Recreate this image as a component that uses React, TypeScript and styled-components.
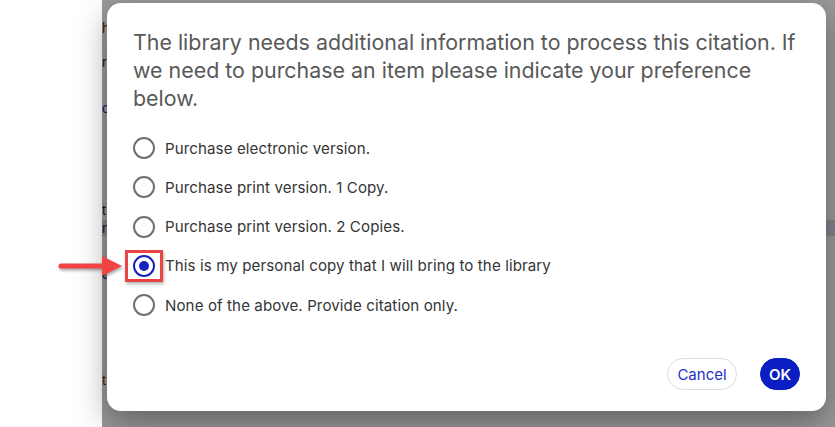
import React, { useState } from "react";
import styled, { createGlobalStyle } from "styled-components";

const GlobalStyle = createGlobalStyle`
  html, body {
    margin: 0;
    padding: 0;
    background: #ffffff;
  }
  body {
    font-family: Inter, "Noto Sans", Arial, sans-serif;
  }
`;

const Screen = styled.div`
  display: flex;
  width: 835px;
  height: 427px;
  overflow: hidden;
`;

const LeftPane = styled.div`
  width: 102px;
  flex-shrink: 0;
  background: #ffffff;
`;

const Stage = styled.div`
  position: relative;
  flex: 1;
  background: #ffffff;
`;

const BehindPage = styled.div`
  display: flex;
  flex-direction: column;
  padding-top: 20px;
  font-family: "Liberation Sans", Arial, sans-serif;
  font-size: 14px;
`;

const BehindLine = styled.div<{ color: string; gap: number; shade?: boolean }>`
  margin-top: ${({ gap }) => gap}px;
  height: 16px;
  color: ${({ color }) => color};
  background: ${({ shade }) => (shade ? "#d8dcec" : "transparent")};
  line-height: 16px;
  white-space: nowrap;
`;

const Overlay = styled.div`
  position: absolute;
  inset: 0;
  display: flex;
  padding: 3px 9px 16px 5px;
  background: rgba(0, 0, 0, 0.4);
`;

const Modal = styled.div`
  flex: 1;
  display: flex;
  flex-direction: column;
  background: #ffffff;
  border-radius: 14px;
  box-shadow: 0 12px 32px rgba(0, 0, 0, 0.35);
  padding: 25px 20px 21px 26px;
`;

const Message = styled.p`
  margin: 0;
  font-size: 21.4px;
  line-height: 28px;
  color: #595959;
  font-weight: 400;
`;

const Options = styled.div`
  display: flex;
  flex-direction: column;
  gap: 17.3px;
  margin-top: 25px;
`;

const OptionRow = styled.label`
  display: flex;
  align-items: center;
  gap: 10px;
  cursor: pointer;
  height: 22px;
`;

const Radio = styled.span<{ checked: boolean }>`
  position: relative;
  width: 22px;
  height: 22px;
  box-sizing: border-box;
  border-radius: 50%;
  border: 2px solid ${({ checked }) => (checked ? "#1523c4" : "#707070")};
  display: flex;
  align-items: center;
  justify-content: center;
  flex-shrink: 0;
  &::after {
    content: "";
    width: 10px;
    height: 10px;
    border-radius: 50%;
    background: ${({ checked }) => (checked ? "#1523c4" : "transparent")};
  }
`;

const Highlight = styled.span`
  position: absolute;
  left: -10px;
  right: -10px;
  top: -7px;
  bottom: -7px;
  border: 3px solid #e94545;
  box-shadow: 1px 2px 3px rgba(0, 0, 0, 0.3);
`;

const Arrow = styled.svg`
  position: absolute;
  right: calc(100% + 4px);
  top: 50%;
  transform: translateY(-50%);
  filter: drop-shadow(1px 2px 1.5px rgba(0, 0, 0, 0.35));
`;

const OptionText = styled.span`
  font-size: 15.1px;
  color: #353535;
  letter-spacing: 0.1px;
`;

const Footer = styled.div`
  margin-top: auto;
  margin-right: 6px;
  display: flex;
  justify-content: flex-end;
  align-items: center;
  gap: 23px;
`;

const Button = styled.button<{ primary?: boolean }>`
  font-family: Inter, "Noto Sans", Arial, sans-serif;
  height: 32px;
  border-radius: 16px;
  font-size: 15px;
  cursor: pointer;
  padding: 0;
  border: 1px solid ${({ primary }) => (primary ? "#0a1ec4" : "#dcdcdc")};
  background: ${({ primary }) => (primary ? "#0a1ec4" : "#ffffff")};
  color: ${({ primary }) => (primary ? "#ffffff" : "#2633c2")};
  font-weight: ${({ primary }) => (primary ? 600 : 400)};
  width: ${({ primary }) => (primary ? "40px" : "70px")};
`;

const options = [
  "Purchase electronic version.",
  "Purchase print version. 1 Copy.",
  "Purchase print version. 2 Copies.",
  "This is my personal copy that I will bring to the library",
  "None of the above. Provide citation only.",
];

const behind = [
  { text: "h", color: "#7a1a10", gap: 0 },
  { text: "r", color: "#1d2a40", gap: 18 },
  { text: "o", color: "#1a2fc0", gap: 30 },
  { text: "t.", color: "#1d2a40", gap: 86 },
  { text: "r", color: "#1d2a40", gap: 2, shade: true },
  { text: "o", color: "#1a2fc0", gap: 30 },
  { text: "t", color: "#6a3a10", gap: 90 },
];

export default function App() {
  const [selected, setSelected] = useState(3);

  return (
    <>
      <GlobalStyle />
      <Screen>
        <LeftPane />
        <Stage>
          <BehindPage>
            {behind.map((b, i) => (
              <BehindLine key={i} color={b.color} gap={b.gap} shade={b.shade}>
                {b.text}
              </BehindLine>
            ))}
          </BehindPage>
          <Overlay>
            <Modal>
              <Message>
                The library needs additional information to process this citation. If we need
                to purchase an item please indicate your preference below.
              </Message>
              <Options>
                {options.map((label, i) => (
                  <OptionRow key={label} onClick={() => setSelected(i)}>
                    <Radio checked={selected === i}>
                      {i === 3 && (
                        <Highlight>
                          <Arrow width="66" height="24" viewBox="0 0 66 24">
                            <path d="M3 9.5 H44 V2 L64 12 L44 22 V14.5 H3 A2.5 2.5 0 0 1 3 9.5 Z" fill="#f04444" />
                          </Arrow>
                        </Highlight>
                      )}
                    </Radio>
                    <OptionText>{label}</OptionText>
                  </OptionRow>
                ))}
              </Options>
              <Footer>
                <Button>Cancel</Button>
                <Button primary>OK</Button>
              </Footer>
            </Modal>
          </Overlay>
        </Stage>
      </Screen>
    </>
  );
}
